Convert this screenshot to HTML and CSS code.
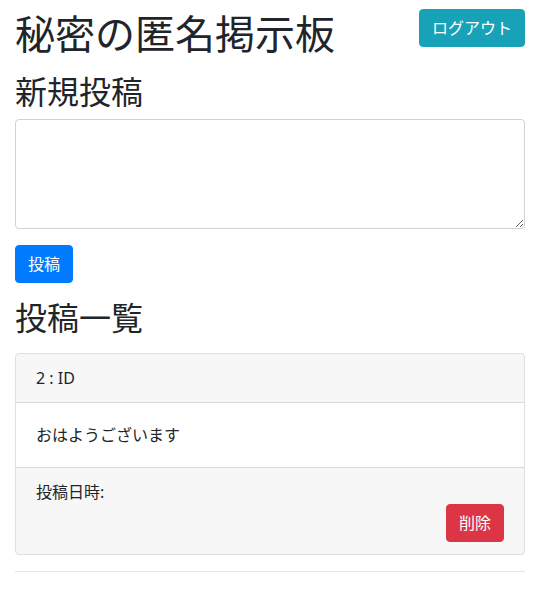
FILE: index.html
```html
<!DOCTYPE html>
<html lang="ja">
<head>
    <meta charset="UTF-8">
    <meta name="viewport" content="width=device-width, initial-scale=1.0">
    <title>秘密の匿名掲示板</title>
    <link rel="stylesheet" href="styles.css">
</head>
<body>
    <div class="container">
        <header class="page-header">
            <h1>秘密の匿名掲示板</h1>
            <button type="button" class="btn btn-info">ログアウト</button>
        </header>

        <h2>新規投稿</h2>
        <form class="post-form">
            <textarea class="form-control" name="content"></textarea>
            <button type="submit" class="btn btn-primary">投稿</button>
        </form>

        <h2 class="list-title">投稿一覧</h2>
        <div class="card">
            <div class="card-header">2 : ID</div>
            <div class="card-body">おはようございます</div>
            <div class="card-footer">
                <div>投稿日時:</div>
                <div class="footer-actions">
                    <button type="button" class="btn btn-danger">削除</button>
                </div>
            </div>
        </div>
        <hr>
    </div>
</body>
</html>
```

FILE: styles.css
```css
body {
    margin: 0;
    font-family: "Noto Sans", "Noto Sans CJK JP", sans-serif;
    font-size: 16px;
    line-height: 1.5;
    color: #212529;
    background-color: #fff;
}

.container {
    padding: 0 12px 0 15px;
}

.page-header {
    display: flex;
    justify-content: space-between;
    align-items: flex-start;
    padding-top: 9px;
    margin-bottom: 7px;
}

h1, h2 {
    font-weight: 400;
    line-height: 1.2;
    margin: 0 0 8px;
}

h1 {
    font-size: 40px;
    margin-top: 1px;
}

h2 {
    font-size: 32px;
}

.btn {
    display: inline-block;
    font-family: inherit;
    font-size: 16px;
    line-height: 1.5;
    padding: 6px 12px;
    border: 1px solid transparent;
    border-radius: 4px;
    color: #fff;
    cursor: pointer;
}

.btn-info {
    background-color: #17a2b8;
    border-color: #17a2b8;
}

.btn-primary {
    background-color: #007bff;
    border-color: #007bff;
}

.btn-danger {
    background-color: #dc3545;
    border-color: #dc3545;
}

.form-control {
    display: block;
    width: 100%;
    height: 110px;
    box-sizing: border-box;
    padding: 6px 12px;
    font-family: inherit;
    font-size: 16px;
    border: 1px solid #ced4da;
    border-radius: 4px;
    margin-bottom: 16px;
}

.post-form {
    margin-bottom: 16px;
}

.list-title {
    margin-bottom: 15px;
}

.card {
    border: 1px solid rgba(0, 0, 0, 0.125);
    border-radius: 4px;
    overflow: hidden;
}

.card-header {
    padding: 12px 20px;
    background-color: rgba(0, 0, 0, 0.03);
    border-bottom: 1px solid rgba(0, 0, 0, 0.125);
}

.card-body {
    padding: 20px;
}

.card-footer {
    padding: 12px 20px;
    background-color: rgba(0, 0, 0, 0.03);
    border-top: 1px solid rgba(0, 0, 0, 0.125);
}

.footer-actions {
    text-align: right;
}

hr {
    margin: 16px 0;
    border: 0;
    border-top: 1px solid rgba(0, 0, 0, 0.1);
}
```
